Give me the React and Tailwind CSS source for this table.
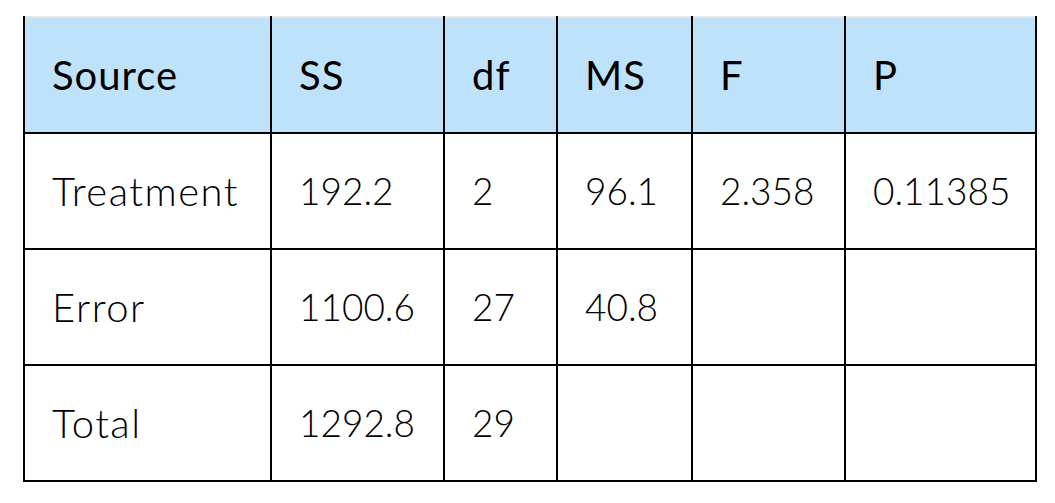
import React from 'react';

const headers = ['Source', 'SS', 'df', 'MS', 'F', 'P'];

const rows = [
  ['Treatment', '192.2', '2', '96.1', '2.358', '0.11385'],
  ['Error', '1100.6', '27', '40.8', '', ''],
  ['Total', '1292.8', '29', '', '', ''],
];

const App = () => {
  return (
    <div className="min-h-[503px] w-[1055px] bg-white pl-[23px] pt-[16px]" style={{ fontFamily: 'Lato, "Open Sans", sans-serif' }}>
      <div className="grid w-[1014px] grid-cols-[245px_171px_111px_133px_151px_189px] gap-[2px] bg-black px-[2px] pb-[2px]">
        {/* Header row */}
        {headers.map((h) => (
          <div
            key={h}
            className="flex h-[116px] items-center border-t-2 border-[#e6e6e6] bg-[#bfe2fb] pl-[27px] text-[40px] font-normal tracking-[1px] text-black"
          >
            {h}
          </div>
        ))}

        {/* Body rows */}
        {rows.map((row, r) =>
          row.map((cell, c) => (
            <div
              key={`${r}-${c}`}
              className={`flex h-[114px] items-center bg-white pl-[27px] font-light text-black ${c === 0 ? 'text-[40px] tracking-[1.5px]' : 'text-[37px]'}`}
            >
              {cell}
            </div>
          ))
        )}
      </div>
    </div>
  );
};

export default App;
